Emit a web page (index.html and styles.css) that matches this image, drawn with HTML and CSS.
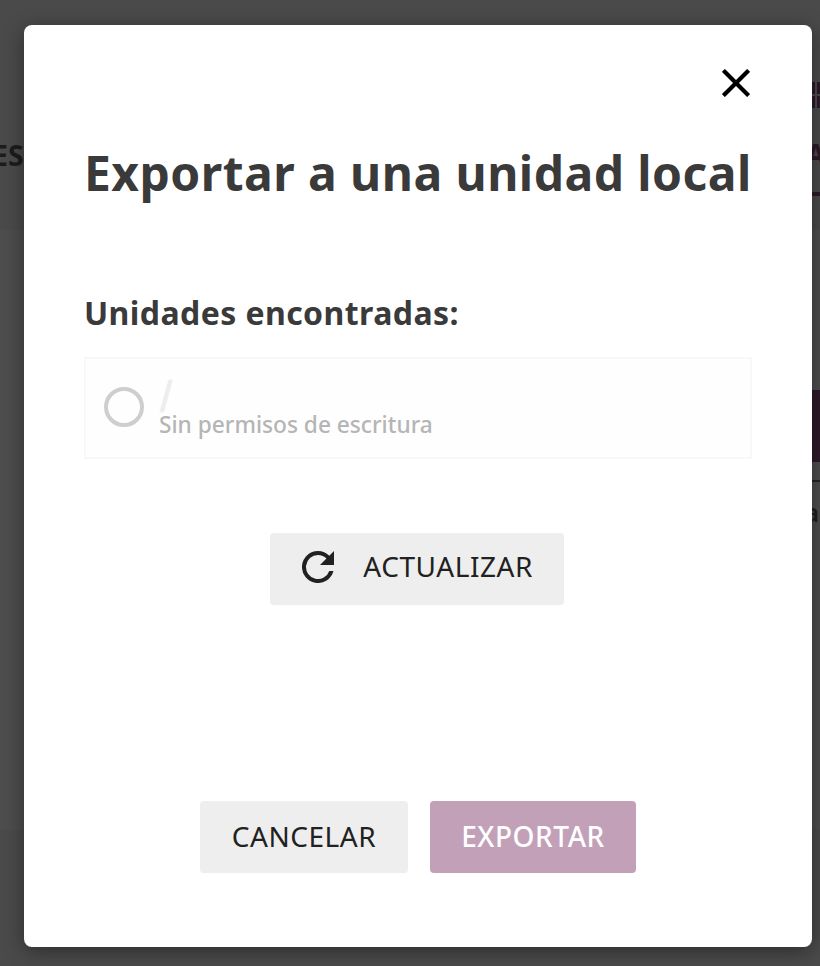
FILE: index.html
```
<!DOCTYPE html>
<html lang="es">
<head>
<meta charset="utf-8">
<title>Exportar a una unidad local</title>
<link rel="stylesheet" href="styles.css">
</head>
<body>
<div class="page">
  <header class="page-header">
    <span class="page-tab">ES</span>
    <div class="page-nav">
      <svg class="page-grid" width="8" height="26" viewBox="0 0 8 26"><path fill="#2d1a28" d="M0 0h3v12H0zM5 0h3v12H5zM0 14h3v12H0zM5 14h3v12H5z"/></svg>
      <span class="page-active">A</span>
    </div>
  </header>
  <main class="page-main">
    <div class="page-side">
      <div class="page-button"></div>
      <div class="page-rule"></div>
      <span class="page-label">a</span>
    </div>
  </main>
  <footer class="page-footer"></footer>
</div>
<section class="dialog" role="dialog">
  <button class="close" aria-label="Cerrar">
    <svg width="28" height="28" viewBox="0 0 28 28"><path d="M1.4 1.4 26.6 26.6M26.6 1.4 1.4 26.6" stroke="#000" stroke-width="4.2" fill="none"/></svg>
  </button>
  <h1 class="title">Exportar a una unidad local</h1>
  <h2 class="subtitle">Unidades encontradas:</h2>
  <div class="drive">
    <span class="radio"></span>
    <div class="drive-text">
      <span class="drive-name">/</span>
      <span class="drive-note">Sin permisos de escritura</span>
    </div>
  </div>
  <button class="button refresh">
    <svg width="32" height="32" viewBox="4 4 16 16"><path fill="#212121" d="M17.65 6.35A7.958 7.958 0 0 0 12 4a8 8 0 1 0 7.73 10h-2.08A6 6 0 1 1 12 6c1.66 0 3.14.69 4.22 1.78L13 11h7V4l-2.35 2.35z"/></svg>
    <span class="refresh-label">ACTUALIZAR</span>
  </button>
  <div class="actions">
    <button class="button cancel">CANCELAR</button>
    <button class="button export">EXPORTAR</button>
  </div>
</section>
</body>
</html>
```
FILE: styles.css
```
* { box-sizing: border-box; }
body {
  margin: 0;
  width: 820px;
  height: 966px;
  position: relative;
  overflow: hidden;
  font-family: "Noto Sans", sans-serif;
}
button { border: 0; padding: 0; font-family: inherit; }
svg { display: block; }
.page { height: 966px; display: flex; flex-direction: column; background: #4d4d4d; }
.page-header {
  height: 230px;
  display: flex;
  justify-content: space-between;
  background: #4a4a4a;
}
.page-tab {
  margin: 136px 0 0 -8px;
  font-size: 28.5px;
  line-height: 39px;
  font-weight: 700;
  color: #1c1c1c;
}
.page-nav { width: 8px; height: 196px; padding-top: 82px; border-bottom: 4px solid #2d1a28; overflow: hidden; }
.page-active {
  display: block;
  margin: 27px 0 0 -6px;
  font-size: 28px;
  line-height: 38px;
  font-weight: 700;
  color: #2d1a28;
}
.page-main { height: 600px; display: flex; justify-content: flex-end; }
.page-side { width: 8px; padding-top: 160px; overflow: hidden; }
.page-button { height: 72px; background: #2d1a28; }
.page-rule { height: 2px; margin-top: 18px; background: #252525; }
.page-label { display: block; margin: 12px 0 0 -8px; font-size: 26px; line-height: 36px; font-weight: 600; color: #1f1f1f; }
.page-footer { height: 136px; background: #4a4a4a; }
.dialog {
  position: absolute;
  left: 24px;
  top: 25px;
  width: 788px;
  height: 922px;
  padding: 44px 60px 0;
  display: flex;
  flex-direction: column;
  background: #fff;
  border-radius: 8px;
  box-shadow: 0 4px 20px rgba(0, 0, 0, .4);
}
.close { align-self: flex-end; margin-right: 2px; width: 28px; height: 28px; background: none; }
.title {
  margin: 43px 0 0;
  font-size: 48px;
  line-height: 66px;
  font-weight: 700;
  letter-spacing: .45px;
  color: #3a3a3a;
  white-space: nowrap;
}
.subtitle {
  margin: 85px 0 0;
  font-size: 32px;
  line-height: 44px;
  font-weight: 700;
  letter-spacing: .42px;
  color: #3a3a3a;
  white-space: nowrap;
}
.drive {
  height: 102px;
  margin-top: 22px;
  padding: 0 18px;
  display: flex;
  align-items: center;
  border: 2px solid #f8f8f8;
  background: #fefefe;
}
.radio { width: 40px; height: 40px; margin-top: -2px; border: 4px solid #cecece; border-radius: 50%; }
.drive-text { margin: 2px 0 0 15px; display: flex; flex-direction: column; }
.drive-name {
  height: 32px;
  padding-left: 1px;
  font-family: "Liberation Sans", sans-serif;
  font-size: 44px;
  line-height: 37px;
  color: #ededed;
  -webkit-text-stroke: .6px #ededed;
}
.drive-note { font-size: 22.7px; line-height: 30px; font-weight: 500; color: #b5b5b5; white-space: nowrap; }
.button {
  height: 72px;
  padding-bottom: 2px;
  border-radius: 4px;
  background: #eee;
  color: #212121;
  font-size: 28px;
  line-height: 38px;
  letter-spacing: .55px;
  white-space: nowrap;
}
.refresh {
  align-self: center;
  width: 294px;
  margin: 74px 2px 0 0;
  padding: 0 31px 4px 32px;
  display: flex;
  align-items: center;
  justify-content: space-between;
}
.refresh-label { margin-top: -2px; }
.actions { margin-top: 196px; display: flex; justify-content: center; gap: 22px; }
.cancel { width: 208px; }
.export { width: 206px; background: #c2a0b8; color: #fff; font-weight: 500; }
```
